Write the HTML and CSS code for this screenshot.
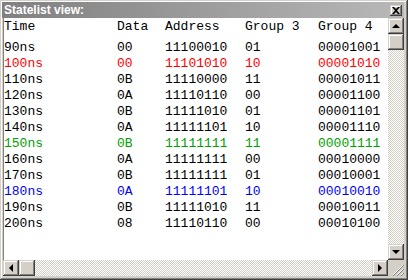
FILE: index.html
```html
<!DOCTYPE html>
<html lang="en">
<head>
  <meta charset="UTF-8" />
  <title>Statelist view</title>
  <link rel="stylesheet" href="styles.css">
</head>
<body>
  <div class="window">
    <div class="titlebar">
      <span class="title">Statelist view:</span>
      <span class="btn close">
        <svg width="8" height="7" viewBox="0 0 8 7"><path d="M0 0h2l2 2 2-2h2L5 3.5 8 7H6L4 5 2 7H0l3-3.5z" fill="#000"/></svg>
      </span>
    </div>
    <div class="body">
      <div class="list">
        <div class="row head"><span>Time</span><span>Data</span><span>Address</span><span>Group 3</span><span>Group 4</span></div>
        <div class="row"><span>90ns</span><span>00</span><span>11100010</span><span>01</span><span>00001001</span></div>
        <div class="row red"><span>100ns</span><span>00</span><span>11101010</span><span>10</span><span>00001010</span></div>
        <div class="row"><span>110ns</span><span>0B</span><span>11110000</span><span>11</span><span>00001011</span></div>
        <div class="row"><span>120ns</span><span>0A</span><span>11110110</span><span>00</span><span>00001100</span></div>
        <div class="row"><span>130ns</span><span>0B</span><span>11111010</span><span>01</span><span>00001101</span></div>
        <div class="row"><span>140ns</span><span>0A</span><span>11111101</span><span>10</span><span>00001110</span></div>
        <div class="row green"><span>150ns</span><span>0B</span><span>11111111</span><span>11</span><span>00001111</span></div>
        <div class="row"><span>160ns</span><span>0A</span><span>11111111</span><span>00</span><span>00010000</span></div>
        <div class="row"><span>170ns</span><span>0B</span><span>11111111</span><span>01</span><span>00010001</span></div>
        <div class="row blue"><span>180ns</span><span>0A</span><span>11111101</span><span>10</span><span>00010010</span></div>
        <div class="row"><span>190ns</span><span>0B</span><span>11111010</span><span>11</span><span>00010011</span></div>
        <div class="row"><span>200ns</span><span>08</span><span>11110110</span><span>00</span><span>00010100</span></div>
      </div>
      <div class="vscroll">
        <span class="btn"><i class="arrow up"></i></span>
        <span class="btn thumb"></span>
        <span class="track"></span>
        <span class="btn"><i class="arrow down"></i></span>
      </div>
    </div>
    <div class="hscroll">
      <span class="btn"><i class="arrow left"></i></span>
      <span class="btn thumb"></span>
      <span class="track"></span>
      <span class="btn"><i class="arrow right"></i></span>
      <span class="grip">
        <svg width="12" height="12" viewBox="0 0 12 12"><path d="M11 1L1 11M11 5L5 11M11 9L9 11" stroke="#fff" stroke-width="1"/><path d="M12 1L1 12M12 5L5 12M12 9L9 12" stroke="#808080" stroke-width="1"/></svg>
      </span>
    </div>
  </div>
</body>
</html>
```

FILE: styles.css
```css
body {
  margin: 0;
  background: #d4d0c8;
}
.window {
  width: 408px;
  height: 280px;
  box-sizing: border-box;
  background: #d4d0c8;
  padding: 2px 4px 4px 2px;
  box-shadow: inset -1px -1px #404040, inset 1px 1px #d4d0c8, inset -2px -2px #808080, inset 2px 2px #fff;
  display: flex;
  flex-direction: column;
}
.titlebar {
  height: 16px;
  flex: none;
  display: flex;
  align-items: center;
  justify-content: space-between;
  padding: 0 2px;
  background: linear-gradient(to right, #808080, #b8b8b8);
}
.title {
  color: #fff;
  font-family: "Liberation Sans", Arial, sans-serif;
  font-weight: bold;
  font-size: 12px;
}
.btn {
  box-sizing: border-box;
  display: flex;
  align-items: center;
  justify-content: center;
  background: #d4d0c8;
  box-shadow: inset -1px -1px #404040, inset 1px 1px #d4d0c8, inset -2px -2px #808080, inset 2px 2px #fff;
}
.close {
  width: 12px;
  height: 11px;
}
.body {
  flex: 1;
  display: flex;
  min-height: 0;
  margin-left: 1px;
}
.list {
  flex: 1;
  background: #fff;
  padding: 1px 0 0 0;
  font-family: "Liberation Mono", "Courier New", monospace;
  font-size: 13px;
  line-height: 16px;
  color: #000;
  border-left: 1px solid #808080;
}
.row {
  display: grid;
  grid-template-columns: 113px 48px 80px 73px auto;
  white-space: pre;
}
.row.head {
  margin-bottom: 5px;
}
.red { color: #ff0000; }
.green { color: #00a000; }
.blue { color: #0000ff; }
.vscroll {
  width: 16px;
  display: flex;
  flex-direction: column;
}
.vscroll .btn {
  height: 16px;
}
.track {
  flex: 1;
  background-image: conic-gradient(#fff 25%, #d4d0c8 0 50%, #fff 0 75%, #d4d0c8 0);
  background-size: 2px 2px;
}
.hscroll {
  height: 16px;
  flex: none;
  display: flex;
  margin-left: 1px;
}
.hscroll .btn {
  width: 16px;
}
.grip {
  width: 16px;
  display: flex;
  align-items: flex-end;
  justify-content: flex-end;
}
.arrow {
  width: 0;
  height: 0;
  border: 4px solid transparent;
}
.arrow.up { border-bottom-color: #000; border-top-width: 0; margin-top: -1px; }
.arrow.down { border-top-color: #000; border-bottom-width: 0; }
.arrow.left { border-right-color: #000; border-left-width: 0; }
.arrow.right { border-left-color: #000; border-right-width: 0; }
```
